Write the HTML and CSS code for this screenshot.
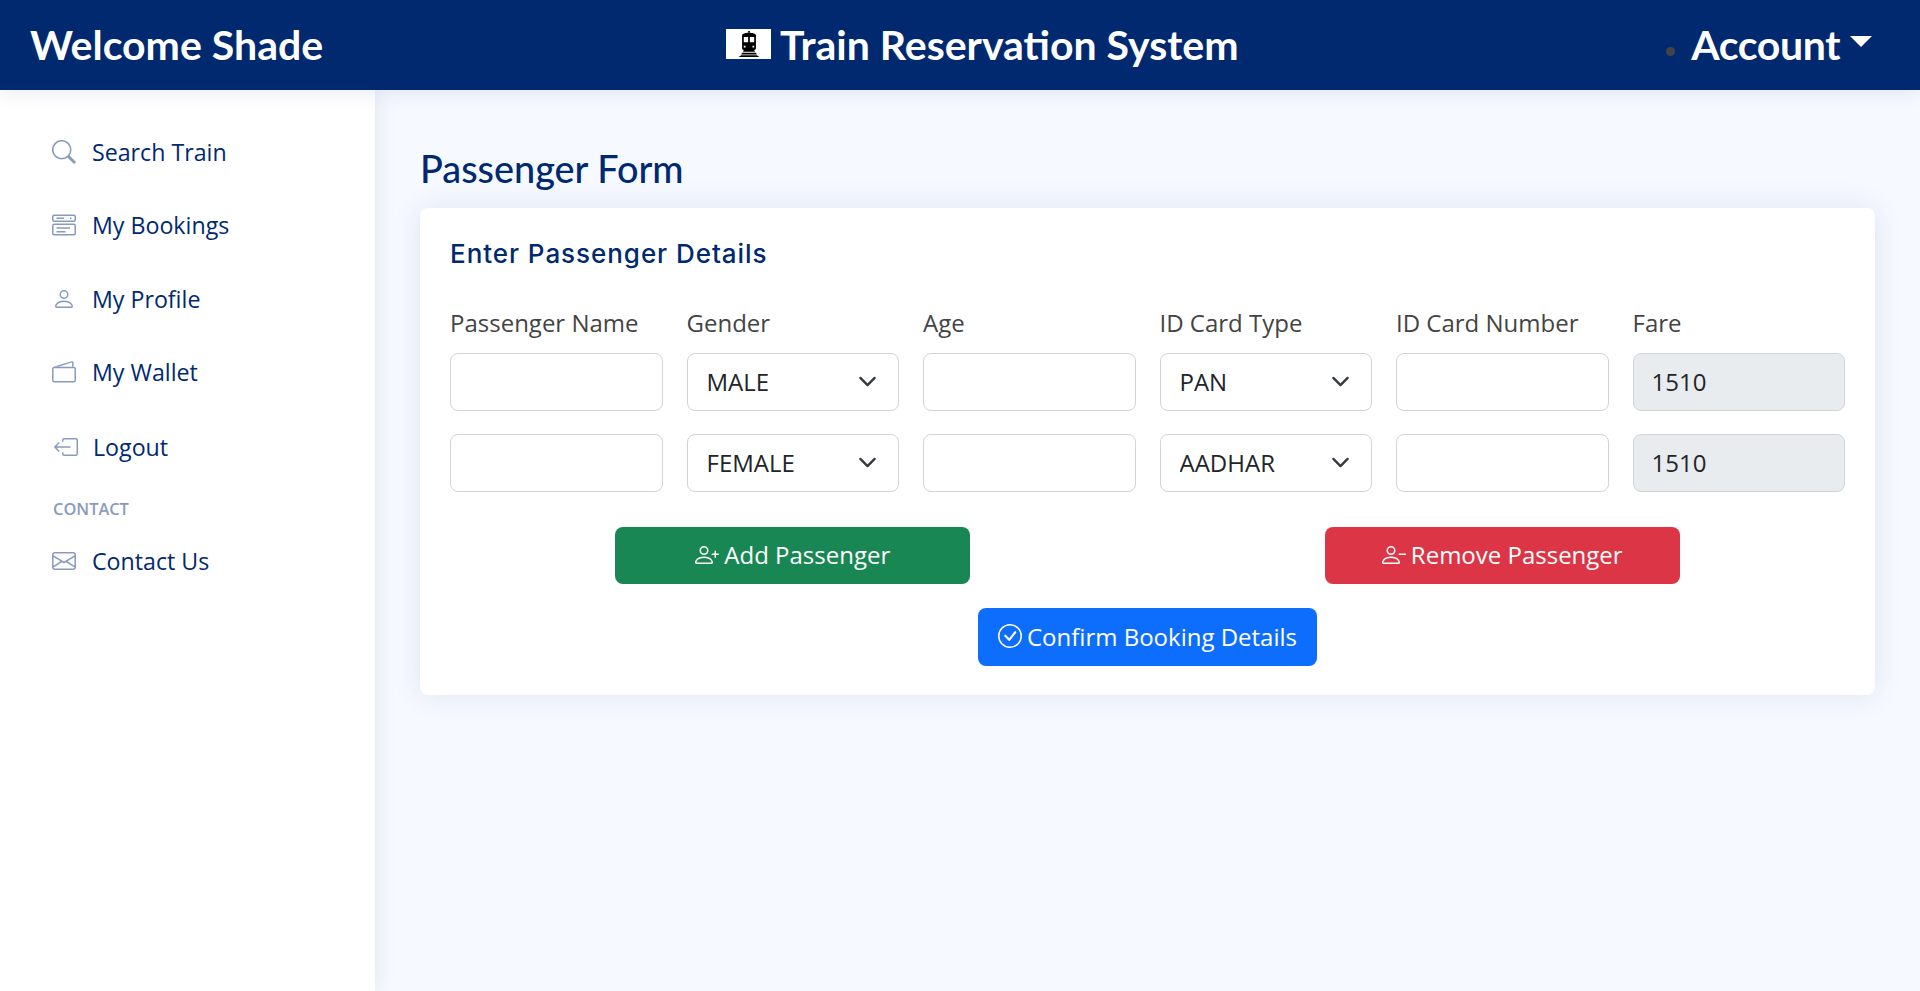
FILE: index.html
```html
<!DOCTYPE html>
<html lang="en">
  <head>
    <meta charset="UTF-8" />
    <title>Passenger Form</title>
    <link rel="stylesheet" href="styles.css">
  </head>
  <body>
    <header class="header">
      <div class="welcome">Welcome Shade</div>
      <div class="brand">
        <span class="brand-logo">
          <svg width="22" height="26" viewBox="0 0 24 30">
            <path d="M11 0h2v2h-2z" fill="#000"/>
            <path d="M4 5c0-2 4-3 8-3s8 1 8 3v15c0 1-1 2-2 2H6c-1 0-2-1-2-2z" fill="#000"/>
            <path d="M6 7h5v6H6zM13 7h5v6h-5z" fill="#fff"/>
            <path d="M6 17h2v2H6zM16 17h2v2h-2z" fill="#fff"/>
            <path d="M6 22h12l1 2H5zM4 25h16l1 2H3zM3 28h18l3 2H0z" fill="#000"/>
          </svg>
        </span>
        Train Reservation System
      </div>
      <div class="account">
        <span class="account-dot"></span>
        <span class="account-name">Account</span>
        <span class="caret"></span>
      </div>
    </header>

    <div class="layout">
      <aside class="sidebar">
        <ul class="nav">
          <li class="nav-item">
            <svg class="nav-icon" viewBox="0 0 16 16"><path d="M11.7 10.3a6.5 6.5 0 1 0-1.4 1.4l3.85 3.85a1 1 0 0 0 1.4-1.4zM6.5 12a5.5 5.5 0 1 1 0-11 5.5 5.5 0 0 1 0 11z"/></svg>
            Search Train
          </li>
          <li class="nav-item">
            <svg class="nav-icon" viewBox="0 0 16 16"><path d="M1.500 1h13A1.500 1.500 0 0 1 16 2.500v2A1.500 1.500 0 0 1 14.500 6h-13A1.500 1.500 0 0 1 0 4.500v-2A1.500 1.500 0 0 1 1.500 1zm0 1a.5.5 0 0 0-.5.5v2a.5.5 0 0 0 .5.5h13a.5.5 0 0 0 .5-.5v-2a.5.5 0 0 0-.5-.5zM1.500 7h13A1.500 1.500 0 0 1 16 8.500v5a1.500 1.500 0 0 1-1.500 1.500h-13A1.500 1.500 0 0 1 0 13.500v-5A1.500 1.500 0 0 1 1.500 7zm0 1a.5.5 0 0 0-.5.5v5a.5.5 0 0 0 .5.5h13a.5.5 0 0 0 .5-.5v-5a.5.5 0 0 0-.5-.5zM3 3h5v1H3zm9 0h1v1h-1zM3 9.500h9v1H3zm0 2.500h6v1H3z"/></svg>
            My Bookings
          </li>
          <li class="nav-item">
            <svg class="nav-icon" viewBox="0 0 16 16"><path d="M8 8a3 3 0 1 0 0-6 3 3 0 0 0 0 6zm2-3a2 2 0 1 1-4 0 2 2 0 0 1 4 0zm4 8c0 1-1 1-1 1H3s-1 0-1-1 1-4 6-4 6 3 6 4zm-1-.004c-.001-.246-.154-.986-.832-1.664C11.516 10.68 10.289 10 8 10c-2.29 0-3.516.68-4.168 1.332-.678.678-.83 1.418-.832 1.664z"/></svg>
            My Profile
          </li>
          <li class="nav-item">
            <svg class="nav-icon" viewBox="0 0 16 16"><path d="M1.500 4.500h13A1.500 1.500 0 0 1 16 6v7.500a1.500 1.500 0 0 1-1.500 1.500h-13A1.500 1.500 0 0 1 0 13.500V6a1.500 1.500 0 0 1 1.500-1.500zm0 1A.5.5 0 0 0 1 6v7.500a.5.5 0 0 0 .5.5h13a.5.5 0 0 0 .5-.5V6a.5.5 0 0 0-.5-.5z"/><path d="M1 4.500 13 .8c.7-.2 1.400.3 1.400 1v2.700h-1V1.900c0-.2-.2-.2-.3-.2L4.500 4.500z"/></svg>
            My Wallet
          </li>
          <li class="nav-item nav-logout">
            <svg class="nav-icon" viewBox="0 0 16 16"><path d="M5.300 3.500A1.500 1.500 0 0 1 6.800 2h7.700A1.500 1.500 0 0 1 16 3.500v9a1.500 1.500 0 0 1-1.500 1.500H6.800a1.500 1.500 0 0 1-1.500-1.500V11.500h1v1a.5.5 0 0 0 .5.5h7.700a.5.5 0 0 0 .5-.5v-9a.5.5 0 0 0-.5-.5H6.800a.5.5 0 0 0-.5.5V4.500h-1z"/><path d="M.15 8.350a.5.5 0 0 1 0-.7l3-3 .7.7L1.700 7.500H11v1H1.700l2.150 2.150-.7.7z"/></svg>
            Logout
          </li>
          <li class="nav-heading">CONTACT</li>
          <li class="nav-item">
            <svg class="nav-icon" viewBox="0 0 16 16"><path d="M0 4a2 2 0 0 1 2-2h12a2 2 0 0 1 2 2v8a2 2 0 0 1-2 2H2a2 2 0 0 1-2-2zm2-1a1 1 0 0 0-1 1v.2l7 4.200 7-4.200V4a1 1 0 0 0-1-1zm13 2.400-4.700 2.800L15 11.100zm-.03 6.900L9.350 8.800 8 9.600l-1.350-.8-5.620 3.460A1 1 0 0 0 2 13h12a1 1 0 0 0 .97-.7zM1 11.100l4.700-2.900L1 5.400z"/></svg>
            Contact Us
          </li>
        </ul>
      </aside>

      <main class="main">
        <h1 class="page-title">Passenger Form</h1>
        <section class="card">
          <h5 class="card-title">Enter Passenger Details</h5>
          <div class="form-grid">
            <label>Passenger Name</label>
            <label>Gender</label>
            <label>Age</label>
            <label>ID Card Type</label>
            <label>ID Card Number</label>
            <label>Fare</label>

            <input type="text">
            <select><option>MALE</option><option>FEMALE</option></select>
            <input type="text">
            <select><option>PAN</option><option>AADHAR</option></select>
            <input type="text">
            <input type="text" value="1510" disabled>

            <input type="text">
            <select><option>FEMALE</option><option>MALE</option></select>
            <input type="text">
            <select><option>AADHAR</option><option>PAN</option></select>
            <input type="text">
            <input type="text" value="1510" disabled>
          </div>

          <div class="row-buttons">
            <button class="btn btn-green">
              <svg class="btn-icon" viewBox="0 0 16 16"><path d="M6 8a3 3 0 1 0 0-6 3 3 0 0 0 0 6zm2-3a2 2 0 1 1-4 0 2 2 0 0 1 4 0zm4 8c0 1-1 1-1 1H1s-1 0-1-1 1-4 6-4 6 3 6 4zm-1-.004c-.001-.246-.154-.986-.832-1.664C9.516 10.680 8.289 10 6 10c-2.290 0-3.516.680-4.168 1.332-.678.678-.83 1.418-.832 1.664zM13.500 5a.5.5 0 0 1 .5.5V7h1.500a.5.5 0 0 1 0 1H14v1.500a.5.5 0 0 1-1 0V8h-1.500a.5.5 0 0 1 0-1H13V5.500a.5.5 0 0 1 .5-.5z"/></svg>
              Add Passenger
            </button>
            <button class="btn btn-red">
              <svg class="btn-icon" viewBox="0 0 16 16"><path d="M6 8a3 3 0 1 0 0-6 3 3 0 0 0 0 6zm2-3a2 2 0 1 1-4 0 2 2 0 0 1 4 0zm4 8c0 1-1 1-1 1H1s-1 0-1-1 1-4 6-4 6 3 6 4zm-1-.004c-.001-.246-.154-.986-.832-1.664C9.516 10.680 8.289 10 6 10c-2.290 0-3.516.680-4.168 1.332-.678.678-.83 1.418-.832 1.664zM11 7.500a.5.5 0 0 1 .5-.5h4a.5.5 0 0 1 0 1h-4a.5.5 0 0 1-.5-.5z"/></svg>
              Remove Passenger
            </button>
          </div>
          <div class="row-confirm">
            <button class="btn btn-blue">
              <svg class="btn-icon" viewBox="0 0 16 16"><path d="M8 15A7 7 0 1 1 8 1a7 7 0 0 1 0 14zm0 1A8 8 0 1 0 8 0a8 8 0 0 0 0 16z"/><path d="M10.970 4.970a.235.235 0 0 0-.02.022L7.477 9.417 5.384 7.323a.75.75 0 0 0-1.060 1.060L6.970 11.030a.75.75 0 0 0 1.079-.02l3.992-4.990a.75.75 0 0 0-1.071-1.050z"/></svg>
              Confirm Booking Details
            </button>
          </div>
        </section>
      </main>
    </div>
  </body>
</html>
```

FILE: styles.css
```css
* {
  box-sizing: border-box;
}

html,
body {
  height: 100%;
}

body {
  margin: 0;
  display: flex;
  flex-direction: column;
  background-color: #f6f9ff;
  color: #444;
  font-family: "Open Sans", sans-serif;
  overflow: hidden;
}

/* header */
.header {
  height: 90px;
  flex: none;
  display: flex;
  align-items: center;
  padding: 0 48px 2px 30px;
  background-color: #012970;
  color: #fff;
  font-family: "Lato", sans-serif;
  font-size: 41px;
  font-weight: 700;
  box-shadow: 0 2px 20px rgba(1, 41, 112, 0.1);
  position: relative;
  z-index: 2;
}

.welcome {
  width: 696px;
}

.brand {
  display: flex;
  align-items: center;
  gap: 9px;
}

.brand-logo {
  width: 45px;
  height: 30px;
  display: flex;
  align-items: center;
  justify-content: center;
  background-color: #fff;
}

.account {
  margin-left: auto;
  display: flex;
  align-items: center;
}

.account-name {
  letter-spacing: -0.4px;
}

.account-dot {
  width: 9px;
  height: 9px;
  margin: 14px 16px 0 0;
  border-radius: 50%;
  background-color: #444;
}

.caret {
  margin: 0 0 5px 10px;
  border-top: 11px solid #fff;
  border-left: 11px solid transparent;
  border-right: 11px solid transparent;
}

/* sidebar and content */
.layout {
  flex: 1;
  display: flex;
  min-height: 0;
}

.sidebar {
  width: 375px;
  flex: none;
  padding: 25px 20px 0 52px;
  background-color: #fff;
  box-shadow: 0 0 20px rgba(1, 41, 112, 0.1);
}

.nav {
  list-style: none;
  margin: 0;
  padding: 0;
}

.nav-item {
  height: 73.5px;
  display: flex;
  align-items: center;
  gap: 16px;
  color: #012970;
  font-size: 23.2px;
  font-weight: 500;
}

.nav-logout {
  height: 76px;
  padding-left: 2px;
  gap: 15px;
}

.nav-icon {
  width: 24px;
  height: 24px;
  flex: none;
  fill: #899bbd;
}

.nav-heading {
  height: 32px;
  margin-top: 7.5px;
  display: flex;
  align-items: center;
  padding-left: 1px;
  color: #899bbd;
  font-size: 16.4px;
  font-weight: 600;
}

.main {
  flex: 1;
  padding: 56px 45px 0;
}

.page-title {
  margin: 0 0 17px;
  color: #012970;
  font-family: "Lato", sans-serif;
  font-size: 37.8px;
  font-weight: 500;
  line-height: 45px;
}

.card {
  padding: 30px 30px 29px;
  border-radius: 8px;
  background-color: #fff;
  box-shadow: 0 0 30px rgba(1, 41, 112, 0.1);
}

.card-title {
  margin: 0 0 35px;
  color: #012970;
  font-family: "Inter", sans-serif;
  font-size: 26px;
  font-weight: 500;
  letter-spacing: 0.95px;
  line-height: 32px;
}

.form-grid {
  display: grid;
  grid-template-columns: repeat(6, 1fr);
  column-gap: 24px;
  row-gap: 23.4px;
}

.form-grid label {
  margin-bottom: -11.4px;
  font-size: 24px;
  line-height: 36px;
}

.form-grid input,
.form-grid select {
  width: 100%;
  height: 57.6px;
  padding: 0 18px 1px;
  border: 1px solid #ced4da;
  border-radius: 8px;
  background-color: #fff;
  color: #212529;
  font-family: "Open Sans", sans-serif;
  font-size: 24px;
  outline: none;
}

.form-grid select {
  padding-left: 19px;
  appearance: none;
  background-image: url("data:image/svg+xml,%3csvg xmlns='http://www.w3.org/2000/svg' viewBox='0 0 16 16'%3e%3cpath fill='none' stroke='%23343a40' stroke-linecap='round' stroke-linejoin='round' stroke-width='2' d='m2 5 6 6 6-6'/%3e%3c/svg%3e");
  background-repeat: no-repeat;
  background-position: right 21px center;
  background-size: 19px 19px;
}

.form-grid input:disabled {
  background-color: #e9ecef;
}

.row-buttons {
  display: grid;
  grid-template-columns: 1fr 1fr;
  column-gap: 24px;
  margin-top: 35px;
  justify-items: center;
}

.row-confirm {
  display: flex;
  justify-content: center;
  margin-top: 24px;
}

.btn {
  height: 57.6px;
  display: inline-flex;
  align-items: center;
  justify-content: center;
  gap: 5px;
  padding: 0 19.5px 1px;
  border: none;
  border-radius: 8px;
  color: #fff;
  font-family: "Open Sans", sans-serif;
  font-size: 24px;
}

.btn-green,
.btn-red {
  width: 355px;
}

.btn-green {
  background-color: #198754;
}

.btn-red {
  background-color: #dc3545;
}

.btn-blue {
  background-color: #0d6efd;
}

.btn-icon {
  width: 24px;
  height: 24px;
  fill: #fff;
}
```
